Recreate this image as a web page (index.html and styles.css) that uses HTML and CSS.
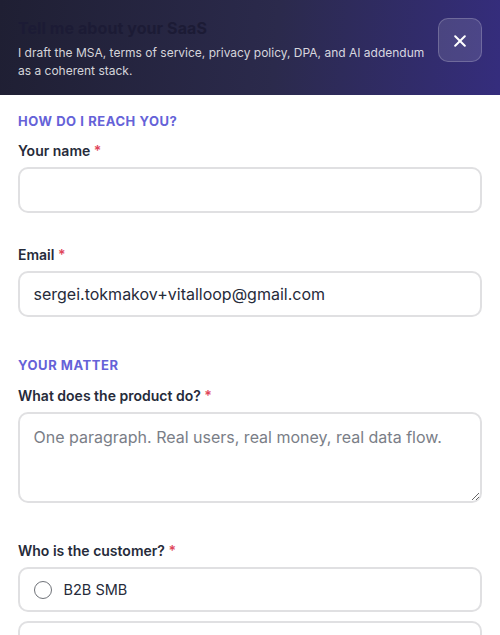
FILE: index.html
```html
<!DOCTYPE html>
<html lang="en">
<head>
<meta charset="utf-8">
<title>Tell me about your SaaS</title>
<link rel="stylesheet" href="styles.css">
</head>
<body>
<div class="modal">
  <header class="head">
    <div class="head-text">
      <h1 class="title">Tell me about your SaaS</h1>
      <p class="sub">I draft the MSA, terms of service, privacy policy, DPA, and AI addendum as a coherent stack.</p>
    </div>
    <button class="close" type="button" aria-label="Close">
      <svg width="12" height="12" viewBox="0 0 12 12" fill="none" stroke="#fff" stroke-width="2" stroke-linecap="round"><path d="M1.2 1.2l9.6 9.6M10.8 1.2l-9.6 9.6"/></svg>
    </button>
  </header>
  <form class="form">
    <section class="section">
      <h2 class="section-title">HOW DO I REACH YOU?</h2>
      <div class="field">
        <label class="label">Your name <span class="req">*</span></label>
        <input class="input" type="text">
      </div>
      <div class="field">
        <label class="label">Email <span class="req">*</span></label>
        <input class="input" type="email" value="sergei.tokmakov+vitalloop@gmail.com">
      </div>
    </section>
    <section class="section">
      <h2 class="section-title">YOUR MATTER</h2>
      <div class="field">
        <label class="label">What does the product do? <span class="req">*</span></label>
        <textarea class="input area" placeholder="One paragraph. Real users, real money, real data flow."></textarea>
      </div>
      <div class="field">
        <label class="label">Who is the customer? <span class="req">*</span></label>
        <div class="options">
          <label class="option"><span class="radio"></span>B2B SMB</label>
          <label class="option"><span class="radio"></span>B2B enterprise</label>
        </div>
      </div>
    </section>
  </form>
</div>
</body>
</html>
```
FILE: styles.css
```css
* { box-sizing: border-box; }
html, body { margin: 0; height: 635px; overflow: hidden; background: #fff; }
body { font-family: Inter, "Liberation Sans", sans-serif; color: #262b3a; }
.head {
  height: 95px;
  padding: 18px 18px 0;
  display: flex;
  justify-content: space-between;
  gap: 12px;
  background: linear-gradient(95deg, #1f1f33 0%, #2b2a4c 55%, #352d7d 100%);
}
.head-text { flex: 1; min-width: 0; }
.title { margin: 0; font-size: 16px; line-height: 20px; font-weight: 700; letter-spacing: .08px; color: #1c1b35; }
.sub { margin: 6px 0 0; font-size: 12px; line-height: 18px; color: rgba(255,255,255,.82); }
.close {
  flex: none; width: 44px; height: 44px; padding: 2px 0 0;
  display: flex; align-items: center; justify-content: center;
  background: rgba(255,255,255,.12);
  border: 1px solid rgba(255,255,255,.2);
  border-radius: 10px;
}
.form { padding: 17px 18px 0; }
.section { margin-bottom: 39px; }
.section-title { margin: 0 0 11px; font-size: 13px; line-height: 18px; font-weight: 700; letter-spacing: .55px; color: #6562d8; }
.section + .section .section-title { margin-bottom: 12px; }
.field { margin-bottom: 38px; }
.section:first-child .field { margin-bottom: 32px; }
.section:first-child .field:last-child { margin-bottom: 0; }
.label { display: block; margin-bottom: 6px; font-size: 14px; line-height: 20px; font-weight: 600; color: #262b3a; }
.req { color: #e0455a; }
.input {
  display: block; width: 100%; height: 46px; padding: 0 13.5px;
  font: 400 16px/24px Inter, "Liberation Sans", sans-serif;
  color: #262b3a; background: #fff;
  border: 2px solid #e0e0e2; border-radius: 10px; outline: none;
}
.area { height: 91px; padding: 11px 13.5px; resize: vertical; }
.area::placeholder { color: #7a7e87; opacity: 1; }
.options { display: flex; flex-direction: column; gap: 9px; }
.option {
  display: flex; align-items: center; gap: 12px;
  height: 45px; padding: 0 13.5px;
  border: 2px solid #e0e0e2; border-radius: 10px;
  font-size: 14.5px; color: #262b3a;
}
.radio { width: 18px; height: 18px; border: 1.5px solid #6f7278; border-radius: 50%; flex: none; }
```
